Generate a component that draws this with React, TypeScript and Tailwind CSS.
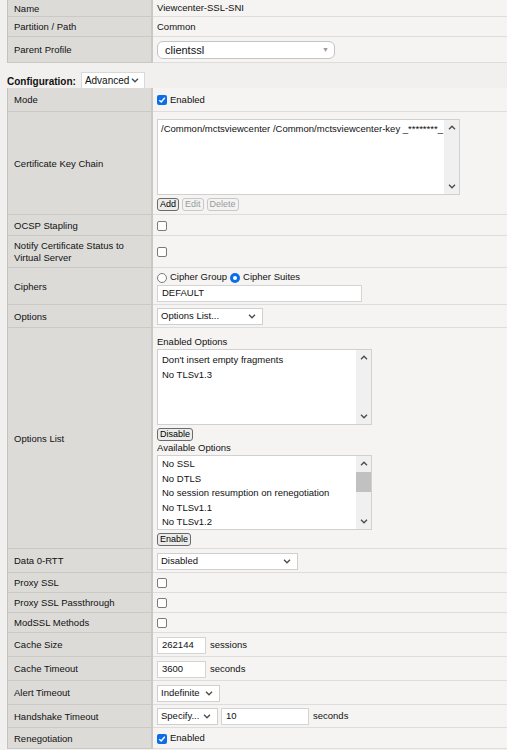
import React from 'react';

const Chevron = ({ up }: { up?: boolean }) => (
  <svg width="8" height="5" viewBox="0 0 8 5" className="shrink-0">
    <path d={up ? 'M1 4.2L4 1.2L7 4.2' : 'M1 0.8L4 3.8L7 0.8'} stroke="#4a4a4a" strokeWidth="1.3" fill="none" />
  </svg>
);

const Checkbox = ({ checked }: { checked?: boolean }) =>
  checked ? (
    <span className="inline-flex items-center justify-center w-[10px] h-[10px] rounded-[2px] bg-[#0b6ee6] shrink-0">
      <svg width="8" height="8" viewBox="0 0 8 8">
        <path d="M1.3 4.2L3.2 6L6.8 1.8" stroke="#fff" strokeWidth="1.4" fill="none" />
      </svg>
    </span>
  ) : (
    <span className="inline-block w-[10px] h-[10px] rounded-[2px] border border-[#7a7a7a] bg-white shrink-0" />
  );

const Radio = ({ checked }: { checked?: boolean }) =>
  checked ? (
    <span className="inline-flex items-center justify-center w-[10px] h-[10px] rounded-full bg-[#0b6ee6] shrink-0">
      <span className="w-[4px] h-[4px] rounded-full bg-white" />
    </span>
  ) : (
    <span className="inline-block w-[10px] h-[10px] rounded-full border border-[#7a7a7a] bg-white shrink-0" />
  );

function Select({ value, className }: { value: string; className: string }) {
  return (
    <div className={`flex items-center justify-between h-[17px] bg-white border border-[#cfcfcf] pl-[3px] pr-[6px] ${className}`}>
      <span>{value}</span>
      <Chevron />
    </div>
  );
}

function Button({ label, disabled }: { label: string; disabled?: boolean }) {
  return (
    <span
      className={`inline-flex items-center h-[13px] px-[2px] rounded-[3px] border text-[9px] leading-[11px] ${
        disabled ? 'border-[#c8c8c8] text-[#9a9a9a] bg-[#f3f3f3]' : 'border-[#6b6b6b] text-black bg-[#ececec]'
      }`}
    >
      {label}
    </span>
  );
}

function Scrollbar({ thumb }: { thumb?: boolean }) {
  return (
    <div className="w-[15px] bg-[#f0f0f0] flex flex-col items-center justify-between py-[5px] relative">
      <Chevron up />
      {thumb && <div className="absolute left-0 right-0 top-[16px] h-[20px] bg-[#c1c1c1]" />}
      <Chevron />
    </div>
  );
}

function Row({ label, h, top, children }: { label: React.ReactNode; h: string; top?: boolean; children?: React.ReactNode }) {
  return (
    <div className={`flex ${h}`}>
      <div className="w-[146px] shrink-0 bg-[#dcdbd8] border-l border-b border-r-2 border-l-[#c3c2bf] border-b-[#cac9c6] border-r-[#c9c8c5] pl-[6px] pt-[1px] flex items-center leading-[12px]">
        {label}
      </div>
      <div
        className={`flex-1 bg-[#f5f4f2] border-b border-[#dedddb] pl-[4px] flex ${
          top ? 'items-start pt-[8px]' : 'items-center pt-[1px]'
        }`}
      >
        {children}
      </div>
    </div>
  );
}

export default function App() {
  return (
    <div className="w-[507px] h-[750px] overflow-hidden bg-[#f1f0ee] text-[9.5px] text-[#111] font-['Liberation_Sans',Arial,sans-serif]">
      <div className="pl-[7px]">
        <Row label="Name" h="h-[17px]">Viewcenter-SSL-SNI</Row>
        <Row label="Partition / Path" h="h-[20px]">Common</Row>
        <Row label="Parent Profile" h="h-[26px]">
          <div className="flex items-center justify-between w-[178px] h-[18px] bg-white border border-[#c4c4c4] rounded-[6px] pl-[7px] pr-[5px] text-[11px]">
            <span>clientssl</span>
            <span className="text-[7px] text-[#9a9a9a]">▼</span>
          </div>
        </Row>
      </div>

      <div className="flex items-end gap-[5px] h-[25px] pl-[7px]">
        <span className="font-bold text-[10px] leading-[12px]">Configuration:</span>
        <div className="flex items-center justify-between w-[64px] h-[17px] bg-white border border-[#d8d8d8] pl-[3px] pr-[5px] text-[10px] mb-[-1px]">
          <span>Advanced</span>
          <Chevron />
        </div>
      </div>

      <div className="pl-[7px]">
        <Row label="Mode" h="h-[24px]">
          <div className="flex items-center gap-[3px]">
            <Checkbox checked />
            <span>Enabled</span>
          </div>
        </Row>
        <Row label="Certificate Key Chain" h="h-[103px]" top>
          <div className="flex flex-col gap-[3px] mt-[-1px]">
            <div className="flex w-[303px] h-[76px] bg-white border border-[#d0d0d0]">
              <div className="flex-1 pl-[3px] pt-[2px] leading-[13px]">
                /Common/mctsviewcenter /Common/mctsviewcenter-key _********_
              </div>
              <Scrollbar />
            </div>
            <div className="flex gap-[3px]">
              <Button label="Add" />
              <Button label="Edit" disabled />
              <Button label="Delete" disabled />
            </div>
          </div>
        </Row>
        <Row label="OCSP Stapling" h="h-[21px]">
          <Checkbox />
        </Row>
        <Row label={<span>Notify Certificate Status to<br />Virtual Server</span>} h="h-[32px]">
          <Checkbox />
        </Row>
        <Row label="Ciphers" h="h-[37px]">
          <div className="flex flex-col gap-[1px]">
            <div className="flex items-center gap-[3px] h-[12px]">
              <Radio />
              <span>Cipher Group</span>
              <Radio checked />
              <span>Cipher Suites</span>
            </div>
            <div className="w-[205px] h-[17px] bg-white border border-[#d4d4d4] pl-[4px] flex items-center">DEFAULT</div>
          </div>
        </Row>
        <Row label="Options" h="h-[23px]">
          <Select value="Options List..." className="w-[106px]" />
        </Row>
        <Row label="Options List" h="h-[221px]" top>
          <div className="flex flex-col leading-[12px]">
            <span className="mb-[1px]">Enabled Options</span>
            <div className="flex w-[215px] h-[76px] bg-white border border-[#d0d0d0]">
              <div className="flex-1 pl-[4px] pt-[2px] leading-[15px]">
                <div>Don't insert empty fragments</div>
                <div>No TLSv1.3</div>
              </div>
              <Scrollbar />
            </div>
            <div className="mt-[3px]">
              <Button label="Disable" />
            </div>
            <span className="mt-[1px] mb-[1px]">Available Options</span>
            <div className="flex w-[215px] h-[75px] bg-white border border-[#d0d0d0]">
              <div className="flex-1 pl-[4px] pt-[1px] leading-[14.5px]">
                <div>No SSL</div>
                <div>No DTLS</div>
                <div>No session resumption on renegotiation</div>
                <div>No TLSv1.1</div>
                <div>No TLSv1.2</div>
              </div>
              <Scrollbar thumb />
            </div>
            <div className="mt-[3px]">
              <Button label="Enable" />
            </div>
          </div>
        </Row>
        <Row label="Data 0-RTT" h="h-[24px]">
          <Select value="Disabled" className="w-[141px]" />
        </Row>
        <Row label="Proxy SSL" h="h-[20px]">
          <Checkbox />
        </Row>
        <Row label="Proxy SSL Passthrough" h="h-[20px]">
          <Checkbox />
        </Row>
        <Row label="ModSSL Methods" h="h-[20px]">
          <Checkbox />
        </Row>
        <Row label="Cache Size" h="h-[24px]">
          <div className="flex items-center gap-[4px]">
            <div className="w-[49px] h-[17px] bg-white border border-[#d4d4d4] pl-[4px] flex items-center">262144</div>
            <span>sessions</span>
          </div>
        </Row>
        <Row label="Cache Timeout" h="h-[24px]">
          <div className="flex items-center gap-[4px]">
            <div className="w-[49px] h-[17px] bg-white border border-[#d4d4d4] pl-[4px] flex items-center">3600</div>
            <span>seconds</span>
          </div>
        </Row>
        <Row label="Alert Timeout" h="h-[24px]">
          <Select value="Indefinite" className="w-[63px]" />
        </Row>
        <Row label="Handshake Timeout" h="h-[23px]">
          <div className="flex items-center gap-[3px]">
            <Select value="Specify..." className="w-[61px]" />
            <div className="w-[88px] h-[17px] bg-white border border-[#d4d4d4] pl-[4px] flex items-center">10</div>
            <span className="ml-[1px]">seconds</span>
          </div>
        </Row>
        <Row label="Renegotiation" h="h-[21px]">
          <div className="flex items-center gap-[3px]">
            <Checkbox checked />
            <span>Enabled</span>
          </div>
        </Row>
      </div>
    </div>
  );
}
